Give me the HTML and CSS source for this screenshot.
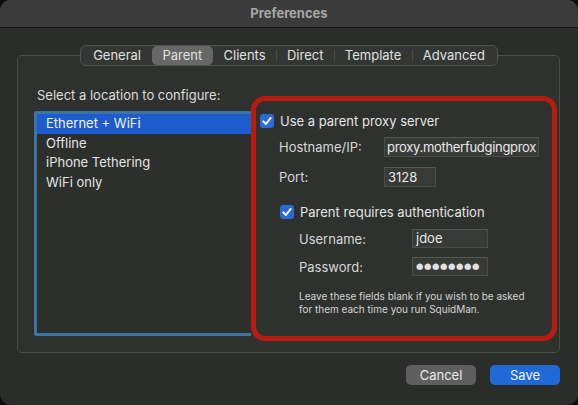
FILE: index.html
```html
<!DOCTYPE html>
<html>
<head>
<meta charset="utf-8">
<link rel="stylesheet" href="styles.css">
</head>
<body>
<div class="window">
  <div class="titlebar">Preferences</div>
  <div class="body">
    <div class="tabs">
      <div class="tab">General</div>
      <div class="tab selected">Parent</div>
      <div class="tab">Clients</div>
      <div class="tab sep">Direct</div>
      <div class="tab sep">Template</div>
      <div class="tab sep">Advanced</div>
    </div>
    <div class="group">
      <div class="left">
        <div class="label">Select a location to configure:</div>
        <div class="list">
          <div class="row sel">Ethernet + WiFi</div>
          <div class="row">Offline</div>
          <div class="row">iPhone Tethering</div>
          <div class="row">WiFi only</div>
        </div>
      </div>
      <div class="panel">
        <div class="check-row first">
          <span class="checkbox"><svg width="14" height="14" viewBox="0 0 14 14"><path d="M3.3 7.3 L5.9 10 L10.7 3.9" fill="none" stroke="#fff" stroke-width="1.9" stroke-linecap="round" stroke-linejoin="round"/></svg></span>
          <span>Use a parent proxy server</span>
        </div>
        <div class="field-row host">
          <span class="flabel">Hostname/IP:</span>
          <span class="field f-host">proxy.motherfudgingprox</span>
        </div>
        <div class="field-row port">
          <span class="flabel">Port:</span>
          <span class="field f-port">3128</span>
        </div>
        <div class="check-row second">
          <span class="checkbox"><svg width="14" height="14" viewBox="0 0 14 14"><path d="M3.3 7.3 L5.9 10 L10.7 3.9" fill="none" stroke="#fff" stroke-width="1.9" stroke-linecap="round" stroke-linejoin="round"/></svg></span>
          <span>Parent requires authentication</span>
        </div>
        <div class="field-row auth user">
          <span class="flabel">Username:</span>
          <span class="field f-auth">jdoe</span>
        </div>
        <div class="field-row auth pass">
          <span class="flabel">Password:</span>
          <span class="field f-auth dots">●●●●●●●●</span>
        </div>
        <div class="help">Leave these fields blank if you wish to be asked<br>for them each time you run SquidMan.</div>
      </div>
    </div>
    <div class="buttons">
      <div class="btn cancel">Cancel</div>
      <div class="btn save">Save</div>
    </div>
  </div>
</div>
</body>
</html>
```
FILE: styles.css
```css
* { box-sizing: border-box; }
html, body { margin: 0; padding: 0; background: #0e0e0e; }
body { font-family: Inter, "Liberation Sans", Arial, sans-serif; font-size: 13px; color: #e2e2e2; }

.window {
  width: 578px;
  height: 405px;
  background: #2b2d2b;
  border-radius: 11px;
  overflow: hidden;
  display: flex;
  flex-direction: column;
}

.titlebar {
  height: 28px;
  line-height: 27px;
  background: #3a3b3a;
  border-bottom: 1px solid #121212;
  text-align: center;
  font-weight: 700;
  font-size: 13px;
  color: #a7a7a7;
}

.body { padding-top: 17px; }

.tabs {
  position: relative;
  z-index: 1;
  display: flex;
  width: max-content;
  margin: 0 auto;
  height: 21px;
  border: 1px solid #515351;
  border-radius: 6px;
  background: #343634;
  padding: 0 1px;
}

.tab {
  position: relative;
  padding: 0 10.7px;
  line-height: 19px;
  color: #e0e0e0;
}
.tab.selected { background: #666766; border-radius: 5px; }
.tab.sep::before {
  content: "";
  position: absolute;
  left: 0;
  top: 4px;
  bottom: 4px;
  width: 1px;
  background: #4a4c4a;
}

.group {
  margin: -11px 18px 0 17px;
  height: 298px;
  border: 1px solid #4a4c4a;
  border-radius: 5px;
  background: #2f312f;
  display: flex;
  align-items: flex-start;
  padding: 0 2px 0 16px;
}

.left { width: 217px; padding-top: 31px; }
.label { padding-left: 3px; line-height: 16px; color: #dcdcdc; }
.list {
  margin-top: 8px;
  height: 225px;
  border: 3px solid #3d74a3;
  border-right: none;
  border-radius: 3px 0 0 3px;
  background: #2d2f2d;
}
.row { padding-left: 9px; line-height: 19.5px; color: #e4e4e4; }
.row.sel { background: #1c5ccd; color: #f2f2f2; }

.panel {
  margin-top: 40px;
  width: 306px;
  height: 245px;
  border: 5px solid #b81c0f;
  border-radius: 14px;
}

.check-row { display: flex; align-items: center; height: 16px; gap: 6px; color: #e4e4e4; }
.check-row.first { margin-top: 12px; padding-left: 4px; }
.check-row.second { margin-top: 17px; padding-left: 24px; }
.checkbox {
  width: 14px;
  height: 14px;
  border-radius: 3px;
  background: #2a6bd8;
  display: flex;
}

.field-row { display: flex; align-items: center; height: 20px; }
.field-row.host { margin-top: 8px; padding-left: 23px; }
.field-row.port { margin-top: 10px; padding-left: 23px; }
.field-row.auth { padding-left: 43px; height: 19px; margin-top: 9px; }
.field-row.user { margin-top: 9px; }
.field-row .flabel { color: #d8d8d8; }
.host .flabel, .port .flabel { width: 105px; }
.auth .flabel { width: 113px; }

.field {
  height: 100%;
  border: 1px solid #4a4c4a;
  border-top-color: #555755;
  background: #383a38;
  padding-left: 3px;
  line-height: 18px;
  color: #e8e8e8;
  overflow: hidden;
  white-space: nowrap;
}
.f-host { width: 155px; letter-spacing: -0.3px; padding-left: 2px; }
.f-port { width: 52px; }
.f-auth { width: 76px; line-height: 17px; }
.dots { font-family: "DejaVu Sans", sans-serif; font-size: 8.5px; letter-spacing: 0.6px; padding-left: 3px; color: #e0e0e0; }

.help {
  margin-top: 14px;
  padding-left: 43px;
  font-size: 10px;
  line-height: 13px;
  color: #d4d4d4;
}

.buttons {
  display: flex;
  justify-content: flex-end;
  gap: 14px;
  margin-top: 12px;
  padding-right: 18px;
}
.btn {
  width: 70px;
  height: 20px;
  line-height: 20px;
  border-radius: 5px;
  text-align: center;
  color: #ececec;
}
.btn.cancel { background: #5d5e5d; }
.btn.save { background: #1f6ad6; color: #f4f4f4; }
```
